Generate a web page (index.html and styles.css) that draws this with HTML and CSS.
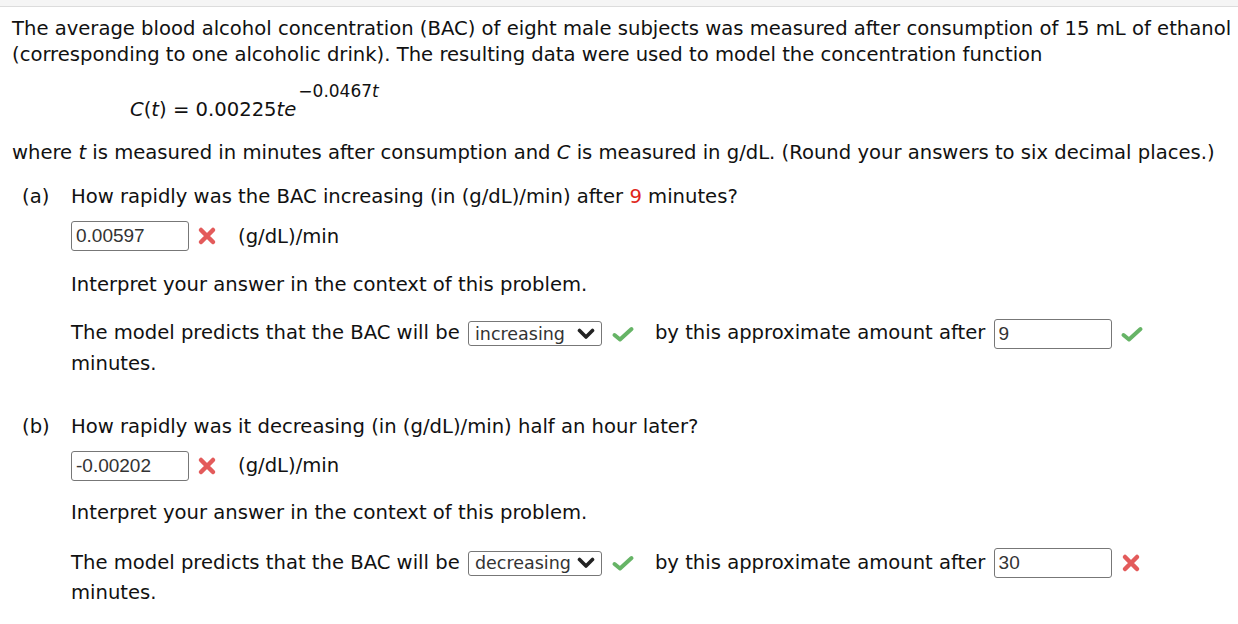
FILE: index.html
```html
<!DOCTYPE html>
<html>
<head>
<meta charset="utf-8">
<link rel="stylesheet" href="styles.css">
</head>
<body>
<div class="topbar"></div>
<div class="content">
  <p class="intro">The average blood alcohol concentration (BAC) of eight male subjects was measured after consumption of 15 mL of ethanol (corresponding to one alcoholic drink). The resulting data were used to model the concentration function</p>
  <div class="formula"><i>C</i>(<i>t</i>) = 0.00225<i>te</i><sup>−0.0467<i>t</i></sup></div>
  <p class="where">where <i>t</i> is measured in minutes after consumption and <i>C</i> is measured in g/dL. (Round your answers to six decimal places.)</p>

  <div class="part part-a">
    <div class="label">(a)</div>
    <div class="body">
      <p class="question">How rapidly was the BAC increasing (in (g/dL)/min) after <span class="red">9</span> minutes?</p>
      <div class="answer">
        <span class="input">0.00597</span>
        <svg class="icon-x" width="22" height="22" viewBox="0 0 22 22"><path d="M5 5 L17 17 M17 5 L5 17" stroke="#e35b5b" stroke-width="4.5" stroke-linecap="round"/></svg>
        <span class="unit">(g/dL)/min</span>
      </div>
      <p class="interpret">Interpret your answer in the context of this problem.</p>
      <p class="model">The model predicts that the BAC will be <span class="select"><span>increasing</span><svg width="18" height="12" viewBox="0 0 18 12"><path d="M2.5 2.5 L9 9 L15.5 2.5" fill="none" stroke="#222" stroke-width="3.6" stroke-linecap="round" stroke-linejoin="round"/></svg></span><svg class="icon-check" width="24" height="18" viewBox="0 0 24 18"><path d="M3.5 10 L9 14.5 L20.5 4" fill="none" stroke="#66b466" stroke-width="4" stroke-linecap="round" stroke-linejoin="round"/></svg>by this approximate amount after <span class="input small">9</span><svg class="icon-check after" width="24" height="18" viewBox="0 0 24 18"><path d="M3.5 10 L9 14.5 L20.5 4" fill="none" stroke="#66b466" stroke-width="4" stroke-linecap="round" stroke-linejoin="round"/></svg><br>minutes.</p>
    </div>
  </div>

  <div class="part part-b">
    <div class="label">(b)</div>
    <div class="body">
      <p class="question">How rapidly was it decreasing (in (g/dL)/min) half an hour later?</p>
      <div class="answer">
        <span class="input">-0.00202</span>
        <svg class="icon-x" width="22" height="22" viewBox="0 0 22 22"><path d="M5 5 L17 17 M17 5 L5 17" stroke="#e35b5b" stroke-width="4.5" stroke-linecap="round"/></svg>
        <span class="unit">(g/dL)/min</span>
      </div>
      <p class="interpret">Interpret your answer in the context of this problem.</p>
      <p class="model">The model predicts that the BAC will be <span class="select"><span>decreasing</span><svg width="18" height="12" viewBox="0 0 18 12"><path d="M2.5 2.5 L9 9 L15.5 2.5" fill="none" stroke="#222" stroke-width="3.6" stroke-linecap="round" stroke-linejoin="round"/></svg></span><svg class="icon-check" width="24" height="18" viewBox="0 0 24 18"><path d="M3.5 10 L9 14.5 L20.5 4" fill="none" stroke="#66b466" stroke-width="4" stroke-linecap="round" stroke-linejoin="round"/></svg>by this approximate amount after <span class="input small">30</span><svg class="icon-x after" width="22" height="22" viewBox="0 0 22 22"><path d="M5 5 L17 17 M17 5 L5 17" stroke="#e35b5b" stroke-width="4.5" stroke-linecap="round"/></svg><br>minutes.</p>
    </div>
  </div>
</div>
</body>
</html>
```
FILE: styles.css
```css
html, body {
  margin: 0;
  padding: 0;
  background: #fff;
}
body {
  font-family: "DejaVu Sans", Verdana, sans-serif;
  font-size: 19.6px;
  color: #111;
}
.topbar {
  height: 6px;
  background: #f5f5f5;
  border-bottom: 1px solid #dcdcdc;
}
.content {
  padding: 9px 6px 0 12px;
}
p {
  margin: 0;
}
.intro {
  line-height: 26px;
}
.formula {
  margin: 29px 0 0 118px;
  line-height: 26px;
  height: 26px;
}
.formula sup {
  font-size: 17px;
  position: relative;
  top: -14px;
  margin-left: 2px;
  vertical-align: top;
  line-height: 1;
}
.where {
  margin-top: 17px;
  line-height: 26px;
}
.part {
  display: flex;
  margin-top: 18px;
}
.part-b {
  margin-top: 36px;
}
.label {
  width: 49px;
  padding-left: 10px;
  line-height: 26px;
}
.body {
  flex: 1;
}
.question {
  line-height: 26px;
}
.red {
  color: #e0271b;
}
.answer {
  display: flex;
  align-items: center;
  margin-top: 11px;
  height: 30px;
}
.input {
  display: inline-block;
  box-sizing: border-box;
  width: 118px;
  height: 30px;
  border: 1.5px solid #777;
  border-radius: 3px;
  font-family: "Liberation Sans", Arial, sans-serif;
  font-size: 19px;
  color: #333;
  padding: 0 4px;
  line-height: 27px;
  vertical-align: middle;
}
.icon-x {
  margin-left: 7px;
}
.unit {
  margin-left: 20px;
}
.interpret {
  margin-top: 21px;
  line-height: 26px;
}
.model {
  margin-top: 20px;
  line-height: 29px;
}
.part-b .interpret {
  margin-top: 19px;
}
.part-b .model {
  margin-top: 22px;
}
.select {
  display: inline-flex;
  align-items: center;
  justify-content: space-between;
  box-sizing: border-box;
  width: 134px;
  height: 25px;
  border: 1.5px solid #777;
  border-radius: 3px;
  padding: 0 6px 0 6px;
  color: #333;
  font-size: 17.5px;
  vertical-align: middle;
  margin-left: 2px;
}
.select span {
  line-height: 22px;
  white-space: nowrap;
}
.select svg {
  flex-shrink: 0;
}
.icon-check {
  vertical-align: middle;
  margin: 0 20px 0 9px;
}
.input.small {
  margin-left: 2px;
}
.after {
  margin-left: 8px;
  vertical-align: middle;
}
```
